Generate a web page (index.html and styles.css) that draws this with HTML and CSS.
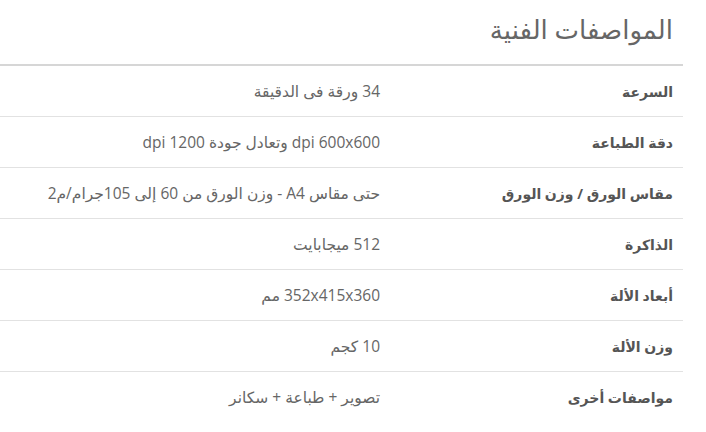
FILE: index.html
```html
<!DOCTYPE html>
<html lang="ar" dir="rtl">
<head>
<meta charset="utf-8">
<link rel="stylesheet" href="styles.css">
</head>
<body>
<section class="specs">
  <h2 class="specs-title">المواصفات الفنية</h2>
  <table class="specs-table">
    <tbody>
      <tr><th>السرعة</th><td>34 ورقة فى الدقيقة</td></tr>
      <tr><th>دقة الطباعة</th><td>dpi 600x600 وتعادل جودة 1200 dpi</td></tr>
      <tr><th>مقاس الورق / وزن الورق</th><td>حتى مقاس A4 - وزن الورق من 60 إلى 105جرام/م2</td></tr>
      <tr><th>الذاكرة</th><td>512 ميجابايت</td></tr>
      <tr><th>أبعاد الألة</th><td>352x415x360 مم</td></tr>
      <tr><th>وزن الألة</th><td>10 كجم</td></tr>
      <tr><th>مواصفات أخرى</th><td>تصوير + طباعة + سكانر</td></tr>
    </tbody>
  </table>
</section>
</body>
</html>
```
FILE: styles.css
```css
html, body {
  margin: 0;
  padding: 0;
  background: #fff;
}
body {
  font-family: "Open Sans", "DejaVu Sans", sans-serif;
  color: #666;
}
.specs {
  width: 683px;
  margin-right: 23px;
}
.specs-title {
  margin: 0;
  padding: 12px 10px 0 0;
  height: 66px;
  box-sizing: border-box;
  font-size: 26px;
  font-weight: normal;
  color: #666;
  line-height: 34px;
  border-bottom: 2px solid #d6d6d6;
}
.specs-table {
  width: 100%;
  border-collapse: collapse;
}
.specs-table th,
.specs-table td {
  height: 50px;
  padding: 0 10px;
  text-align: right;
  border-bottom: 1px solid #e2e2e2;
  vertical-align: middle;
}
.specs-table tr:last-child th,
.specs-table tr:last-child td {
  border-bottom: none;
}
.specs-table th {
  width: 273px;
  font-size: 14px;
  font-weight: bold;
  color: #555;
}
.specs-table td {
  font-size: 15.5px;
  color: #666;
}
```
